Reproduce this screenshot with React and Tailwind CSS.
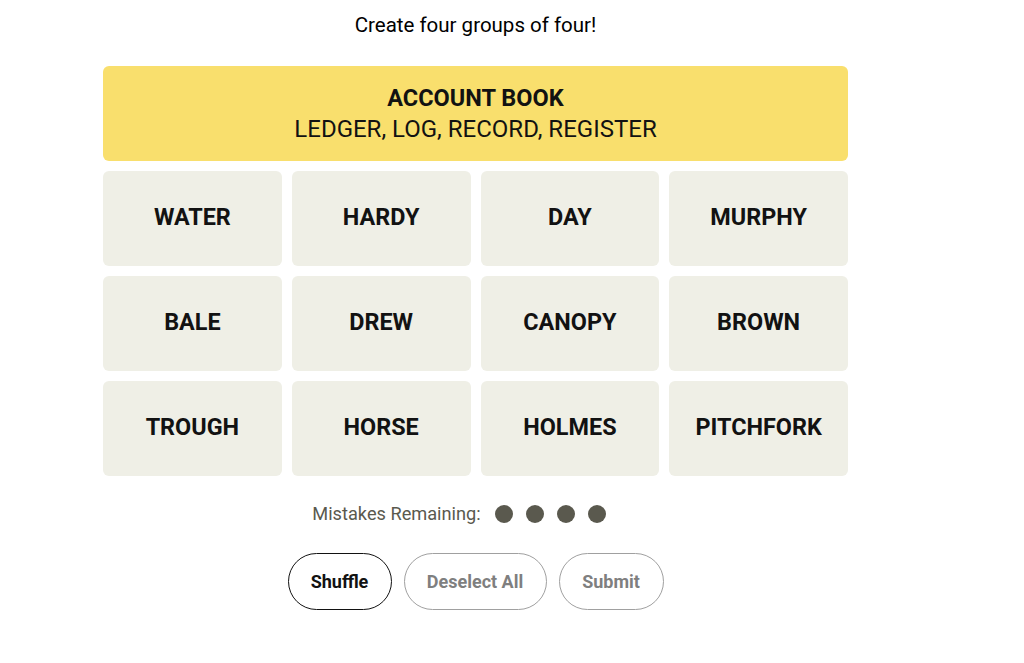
import React from "react";

const rows = [
  ["WATER", "HARDY", "DAY", "MURPHY"],
  ["BALE", "DREW", "CANOPY", "BROWN"],
  ["TROUGH", "HORSE", "HOLMES", "PITCHFORK"],
];

export default function App() {
  return (
    <div
      className="w-[1024px] h-[663px] bg-white text-[#121212] overflow-hidden"
      style={{ fontFamily: "Roboto, 'Liberation Sans', sans-serif" }}
    >
      <div className="ml-[103px] w-[745px] flex flex-col items-center">
        <p className="h-[66px] pt-[13px] text-[20.5px] leading-[25px] text-black">
          Create four groups of four!
        </p>
        <div className="w-full flex flex-col gap-[10px]">
          <div className="h-[95px] rounded-[6px] bg-[#f9df6d] flex flex-col items-center justify-center">
            <div className="text-[23.5px] leading-[31px] font-bold">ACCOUNT BOOK</div>
            <div className="text-[24px] leading-[30px]">LEDGER, LOG, RECORD, REGISTER</div>
          </div>
          {rows.map((r, i) => (
            <div key={i} className="grid grid-cols-4 gap-[10px]">
              {r.map((w) => (
                <div
                  key={w}
                  className="h-[95px] rounded-[6px] bg-[#efefe6] flex items-center justify-center pb-[2px] text-[23.4px] font-bold"
                >
                  {w}
                </div>
              ))}
            </div>
          ))}
        </div>
        <div className="mt-[27px] mr-[33px] h-[22px] flex items-center gap-[14px] text-[18.2px] text-[#5a594e]">
          <span>Mistakes Remaining:</span>
          <div className="flex gap-[13px]">
            {[0, 1, 2, 3].map((d) => (
              <span key={d} className="block w-[18px] h-[18px] rounded-full bg-[#5a594e]" />
            ))}
          </div>
        </div>
        <div className="mt-[28px] flex gap-[12px]">
          <button className="w-[104px] h-[57px] rounded-full border border-[#121212] text-[18px] font-bold text-[#121212] bg-white">
            Shuffle
          </button>
          <button className="w-[143px] h-[57px] rounded-full border border-[#a0a0a0] text-[18px] font-bold text-[#7f7f7f] bg-white">
            Deselect All
          </button>
          <button className="w-[105px] h-[57px] rounded-full border border-[#a0a0a0] text-[18px] font-bold text-[#7f7f7f] bg-white">
            Submit
          </button>
        </div>
      </div>
    </div>
  );
}
